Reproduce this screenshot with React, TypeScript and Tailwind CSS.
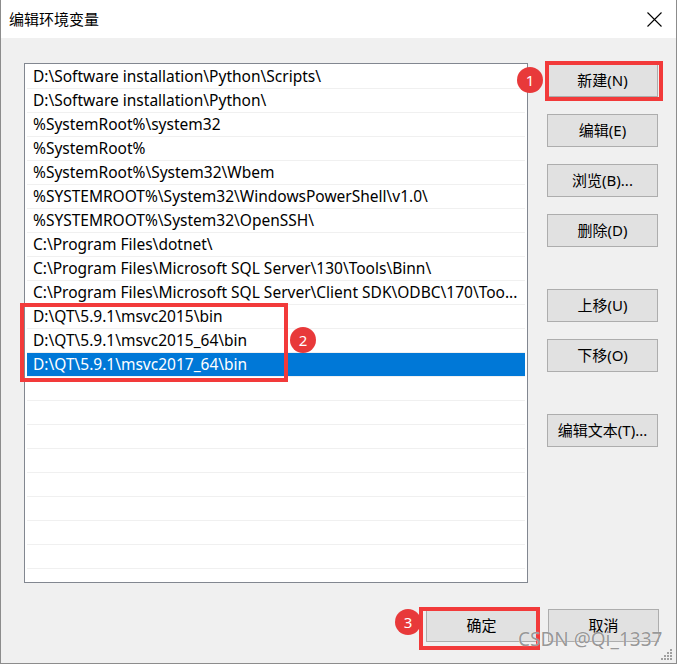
const paths = [
  "D:\\Software installation\\Python\\Scripts\\",
  "D:\\Software installation\\Python\\",
  "%SystemRoot%\\system32",
  "%SystemRoot%",
  "%SystemRoot%\\System32\\Wbem",
  "%SYSTEMROOT%\\System32\\WindowsPowerShell\\v1.0\\",
  "%SYSTEMROOT%\\System32\\OpenSSH\\",
  "C:\\Program Files\\dotnet\\",
  "C:\\Program Files\\Microsoft SQL Server\\130\\Tools\\Binn\\",
  "C:\\Program Files\\Microsoft SQL Server\\Client SDK\\ODBC\\170\\Too...",
  "D:\\QT\\5.9.1\\msvc2015\\bin",
  "D:\\QT\\5.9.1\\msvc2015_64\\bin",
  "D:\\QT\\5.9.1\\msvc2017_64\\bin",
];

const SELECTED = 12;
const TOTAL_ROWS = 22;

const Button = ({ label, className = "" }: { label: string; className?: string }) => (
  <button
    className={`w-[111px] h-[33px] bg-[#e1e1e1] border border-[#adadad] text-[15px] text-black leading-none ${className}`}
  >
    {label}
  </button>
);

const Badge = ({ n, className }: { n: number; className: string }) => (
  <div
    className={`absolute w-[26px] h-[26px] rounded-full bg-[#e8393a] text-white text-[15px] flex items-center justify-center leading-none ${className}`}
  >
    {n}
  </div>
);

const CloseIcon = () => (
  <svg width="15" height="15" viewBox="0 0 15 15">
    <path d="M0.5 0.5 L14.5 14.5 M14.5 0.5 L0.5 14.5" stroke="#000" strokeWidth="1.1" />
  </svg>
);

const ResizeGrip = () => (
  <svg width="12" height="12" viewBox="0 0 12 12" className="absolute right-[3px] bottom-[2px]">
    {[
      [9, 0],
      [6, 3],
      [9, 3],
      [3, 6],
      [6, 6],
      [9, 6],
      [0, 9],
      [3, 9],
      [6, 9],
      [9, 9],
    ].map(([x, y]) => (
      <rect key={`${x}-${y}`} x={x} y={y} width="2" height="2" fill="#a0a0a0" />
    ))}
  </svg>
);

export default function App() {
  const rows = Array.from({ length: TOTAL_ROWS }, (_, i) => paths[i] ?? "");

  return (
    <div
      className="relative w-[677px] h-[664px] bg-[#f0f0f0] border-x border-b border-[#8c8c8c] flex flex-col overflow-hidden"
      style={{ fontFamily: '"Noto Sans", "Noto Sans CJK SC", sans-serif' }}
    >
      {/* title bar */}
      <div className="h-[38px] bg-white flex items-center justify-between pl-[8px] pr-[14px] shrink-0">
        <span className="text-[15px] text-black leading-none">编辑环境变量</span>
        <CloseIcon />
      </div>

      <div className="flex flex-1">
        {/* list */}
        <div className="ml-[23px] mt-[25px] w-[504px] h-[520px] bg-white border border-[#828790] pt-[1px] px-[2px] overflow-hidden">
          {rows.map((p, i) => (
            <div
              key={i}
              className={`h-[24px] border-b border-[#f0f0f0] pl-[6px] flex items-center whitespace-nowrap overflow-hidden text-[15.5px] leading-none ${
                i === SELECTED ? "bg-[#0078d7] text-white" : "text-black"
              }`}
            >
              {p}
            </div>
          ))}
        </div>

        {/* buttons */}
        <div className="ml-[19px] mt-[26px] flex flex-col">
          <Button label="新建(N)" />
          <Button label="编辑(E)" className="mt-[17px]" />
          <Button label="浏览(B)..." className="mt-[17px]" />
          <Button label="删除(D)" className="mt-[17px]" />
          <Button label="上移(U)" className="mt-[42px]" />
          <Button label="下移(O)" className="mt-[17px]" />
          <Button label="编辑文本(T)..." className="mt-[42px]" />
        </div>
      </div>

      <div className="flex justify-end gap-[11px] pr-[17px] pb-[21px]">
        <Button label="确定" />
        <Button label="取消" />
      </div>

      {/* annotations */}
      <div className="absolute left-[544px] top-[61px] w-[118px] h-[40px] border-[4px] border-[#f23a3a]" />
      <div className="absolute left-[19px] top-[303px] w-[268px] h-[79px] border-[4px] border-[#f23a3a]" />
      <div className="absolute left-[418px] top-[607px] w-[121px] h-[43px] border-[4px] border-[#f23a3a]" />
      <Badge n={1} className="left-[516px] top-[67px]" />
      <Badge n={2} className="left-[289px] top-[327px]" />
      <Badge n={3} className="left-[394px] top-[609px]" />

      <div
        className="absolute left-[517px] top-[630px] text-[19px] leading-none text-[#8a8a8a]/90 whitespace-nowrap"
        style={{ textShadow: "0 0 1px #fff" }}
      >
        CSDN @Qi_1337
      </div>
      <ResizeGrip />
    </div>
  );
}
